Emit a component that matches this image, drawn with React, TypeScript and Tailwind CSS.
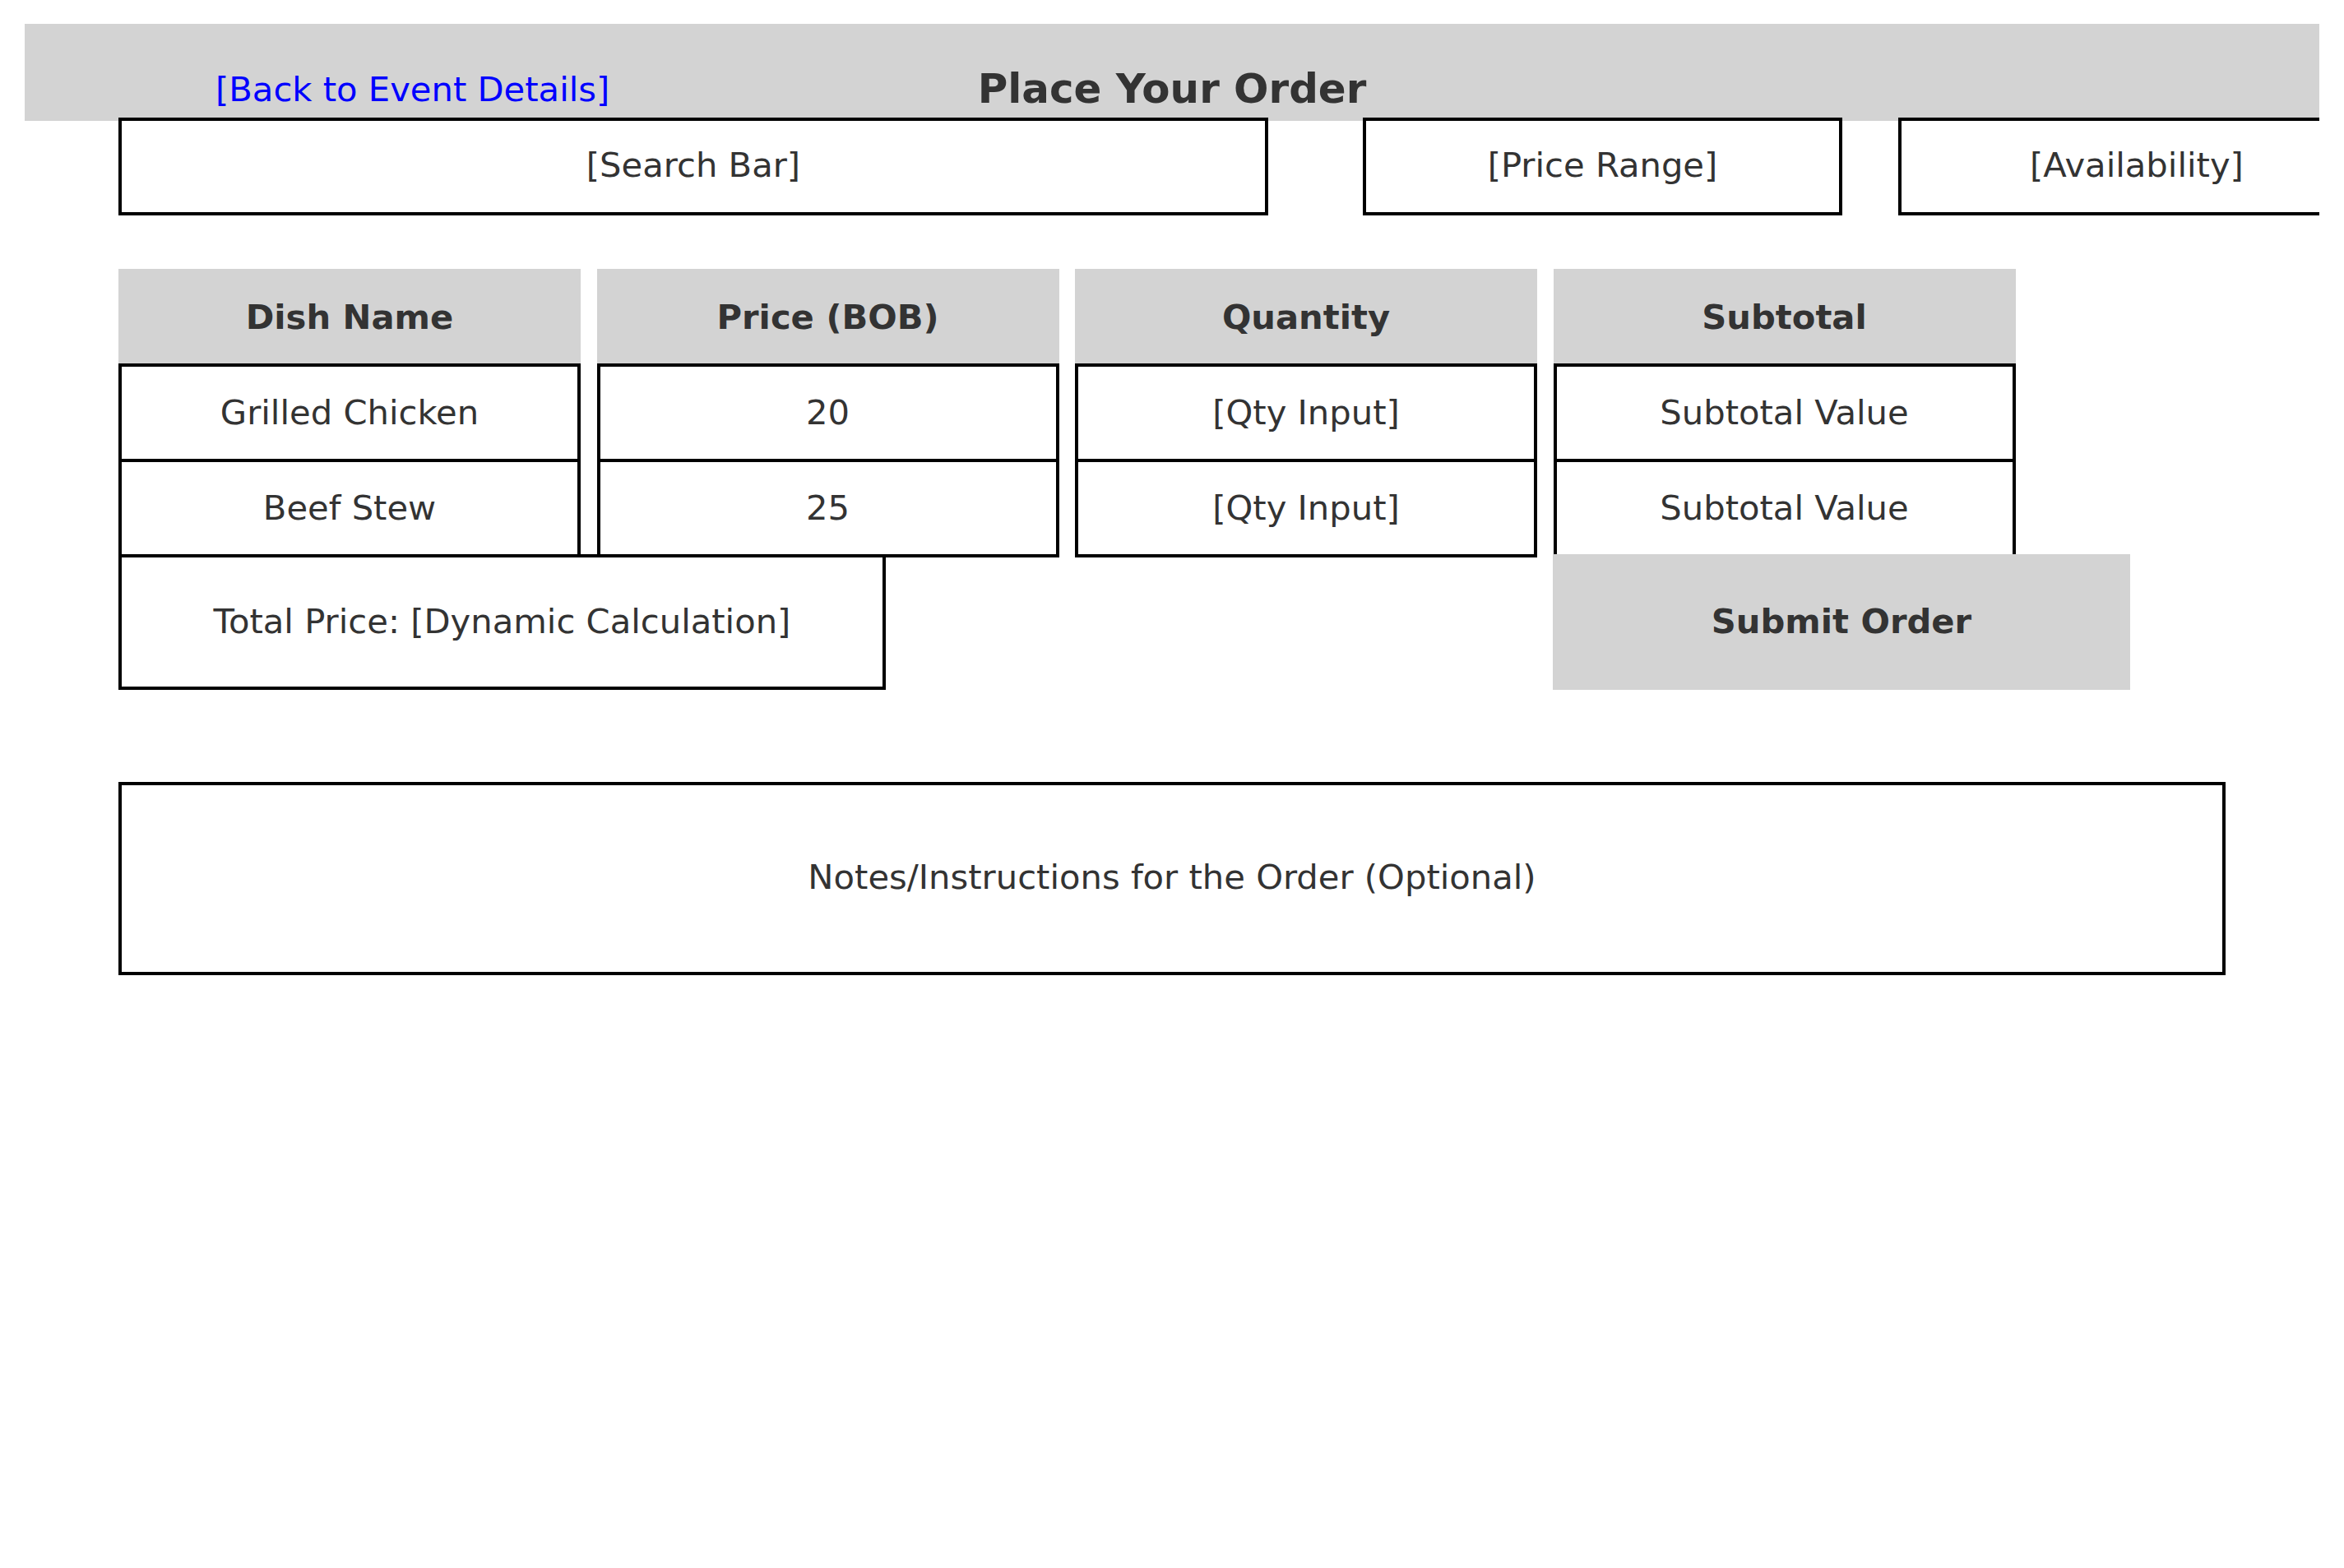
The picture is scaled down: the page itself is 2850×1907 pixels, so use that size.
import React from "react";

const box = "flex items-center justify-center border-4 border-black bg-white";
const head = "flex items-center justify-center bg-[#d3d3d3] font-bold";

const dishes = [
  { name: "Grilled Chicken", price: "20" },
  { name: "Beef Stew", price: "25" },
];

export default function App() {
  return (
    <div className="w-[2850px] h-[1907px] bg-white pt-[29px] px-[30px] font-['DejaVu_Sans',sans-serif] text-[41.7px] text-[#333333]">
      <div className="w-[2790px] overflow-hidden">
        {/* top bar */}
        <div className="grid h-[118px] grid-cols-[1fr_auto_1fr] bg-[#d3d3d3] leading-none">
          <div className="pl-[232px] pt-[59px]">
            <a className="text-[#0000ff]">[Back to Event Details]</a>
          </div>
          <h1 className="pt-[55px] text-[49.9px] font-bold">Place Your Order</h1>
          <div />
        </div>

        {/* filters */}
        <div className="-mt-[4px] flex h-[119px] pl-[114px]">
          <div className={`${box} w-[1398px] shrink-0 pb-[2px]`}>[Search Bar]</div>
          <div className={`${box} ml-[115px] w-[583px] shrink-0 pb-[2px]`}>[Price Range]</div>
          <div className={`${box} ml-[68px] w-[580px] shrink-0 pb-[2px]`}>[Availability]</div>
        </div>

        {/* order table */}
        <div className="mt-[65px] pl-[114px]">
          <div className="grid h-[115px] grid-cols-[repeat(4,562px)] gap-x-[19.5px]">
            <div className={`${head} pt-[3px]`}>Dish Name</div>
            <div className={`${head} pt-[3px]`}>Price (BOB)</div>
            <div className={`${head} pt-[3px]`}>Quantity</div>
            <div className={`${head} pt-[3px]`}>Subtotal</div>
          </div>
          {dishes.map((d, i) => (
            <div
              key={d.name}
              className={`grid h-[120px] grid-cols-[repeat(4,562px)] gap-x-[19.5px] ${i > 0 ? "-mt-[4px]" : ""}`}
            >
              <div className={box}>{d.name}</div>
              <div className={box}>{d.price}</div>
              <div className={box}>[Qty Input]</div>
              <div className={box}>Subtotal Value</div>
            </div>
          ))}

          <div className="-mt-[4px] flex h-[165px]">
            <div className={`${box} w-[933px]`}>Total Price: [Dynamic Calculation]</div>
            <button className={`${head} ml-[811px] w-[702px]`}>Submit Order</button>
          </div>

          <div className={`${box} mt-[112px] h-[235px] w-[2562px] pb-[2px]`}>
            Notes/Instructions for the Order (Optional)
          </div>
        </div>
      </div>
    </div>
  );
}
